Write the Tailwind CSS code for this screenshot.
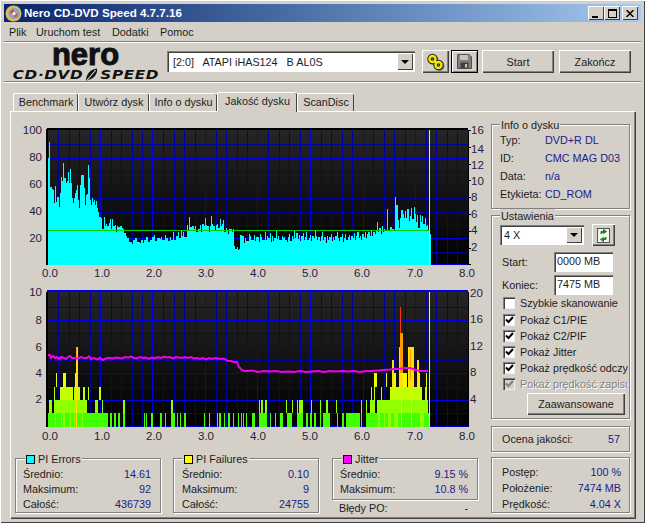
<!DOCTYPE html>
<html><head><meta charset="utf-8"><script src="https://cdn.jsdelivr.net/npm/@tailwindcss/browser@4"></script></head>
<body class="m-0 bg-[#d4d0c8]">
<div class="w-[645px] h-[523px] bg-[#d4d0c8] overflow-hidden flex flex-col pt-[4px] px-[4px] font-['Liberation_Sans',sans-serif] text-[10.8px] leading-[14px] text-[#1c1c1c] shadow-[inset_1px_1px_0_#fff,inset_-1px_-1px_0_#404040]">
  <!-- title -->
  <div class="h-[18px] shrink-0 flex items-center bg-gradient-to-r from-[#0a246a] to-[#a6caf0] pl-[1px] pr-[3px]">
    <svg width="17" height="17" viewBox="0 0 17 17" class="shrink-0"><circle cx="8.5" cy="8.5" r="8" fill="#d8c050"/><circle cx="9" cy="8.5" r="5.8" fill="#8aa4cc"/><path d="M5 8.5a4 4 0 0 1 4-4v4z" fill="#e05030"/><path d="M9 8.5h4a4 4 0 0 1-4 4z" fill="#d06040"/><circle cx="9" cy="8.5" r="1.5" fill="#fff"/></svg>
    <span class="ml-[2px] font-bold text-[11.6px] text-white whitespace-nowrap">Nero CD-DVD Speed 4.7.7.16</span>
    <div class="ml-auto flex">
      <button class="w-[16px] h-[14px] bg-[#d4d0c8] flex items-end justify-start pl-[4px] pb-[2px] shadow-[inset_1px_1px_0_#fff,inset_-1px_-1px_0_#404040]"><span class="block w-[6px] h-[2px] bg-black"></span></button>
      <button class="w-[16px] h-[14px] bg-[#d4d0c8] flex items-center justify-center shadow-[inset_1px_1px_0_#fff,inset_-1px_-1px_0_#404040]"><span class="block w-[9px] h-[9px] border border-black border-t-2"></span></button>
      <button class="ml-[2px] w-[16px] h-[14px] bg-[#d4d0c8] flex items-center justify-center shadow-[inset_1px_1px_0_#fff,inset_-1px_-1px_0_#404040]"><svg width="8" height="7" viewBox="0 0 8 7"><path d="M0.5 0L7.5 7M7.5 0L0.5 7" stroke="#000" stroke-width="1.5"/></svg></button>
    </div>
  </div>
  <!-- menu -->
  <div class="h-[20px] shrink-0 flex items-center pl-[5px] border-b border-[#808080] shadow-[0_1px_0_#fff]">
    <span class="w-[27px]">Plik</span><span class="w-[76px]">Uruchom test</span><span class="w-[48px]">Dodatki</span><span>Pomoc</span>
  </div>
  <!-- toolbar -->
  <div class="h-[39px] shrink-0 flex border-b border-[#808080] shadow-[0_1px_0_#fff] mt-[1px]">
    <div class="w-[163px] shrink-0 flex flex-col items-center pt-[2px]">
      <span class="block font-bold text-[31px] leading-[19px] text-[#111] [-webkit-text-stroke:1px_#111] h-[20px]">nero</span>
      <div class="flex items-center mt-[4px] scale-x-[1.22] text-[#111] font-['DejaVu_Sans',sans-serif] font-bold italic text-[12.5px] leading-[12px] whitespace-nowrap">
        <span class="tracking-[0.5px]">CD·DVD</span>
        <svg width="12" height="13" viewBox="0 0 12 13" class="mx-[1px]"><path d="M10 0.5C5 1 1 6 1 12.5C6 12 11 7 10 0.5z" fill="#111"/><path d="M9 2L2 12" stroke="#d4d0c8"/></svg>
        <span class="tracking-[0.5px]">SPEED</span>
      </div>
    </div>
    <div class="mt-[8px] w-[248px] h-[21px] shrink-0 bg-white flex items-center pl-[6px] pr-[2px] shadow-[inset_1px_1px_0_#808080,inset_2px_2px_0_#404040,inset_-1px_-1px_0_#fff]">
      <span class="whitespace-pre">[2:0]   ATAPI iHAS124   B AL0S</span>
      <span class="ml-auto w-[16px] h-[17px] bg-[#d4d0c8] flex items-center justify-center shadow-[inset_1px_1px_0_#fff,inset_-1px_-1px_0_#404040]"><span class="block border-x-[4px] border-x-transparent border-t-[4px] border-t-black"></span></span>
    </div>
    <button class="mt-[7px] ml-[7px] w-[27px] h-[23px] shrink-0 flex items-center justify-center bg-[#d4d0c8] shadow-[inset_1px_1px_0_#fff,inset_-1px_-1px_0_#404040,inset_-2px_-2px_0_#808080]">
      <svg width="18" height="18" viewBox="0 0 18 18"><g fill="none"><circle cx="6.5" cy="7" r="3" stroke="#777" stroke-width="4"/><circle cx="12.5" cy="13" r="3" stroke="#777" stroke-width="4"/><circle cx="5.5" cy="6" r="3" stroke="#222" stroke-width="4.4"/><circle cx="11.5" cy="12" r="3" stroke="#222" stroke-width="4.4"/><path d="M7.5 8L9.5 10" stroke="#222" stroke-width="4"/><circle cx="5.5" cy="6" r="3" stroke="#f4ec00" stroke-width="2.4"/><circle cx="11.5" cy="12" r="3" stroke="#f4ec00" stroke-width="2.4"/><path d="M7.5 8L9.5 10" stroke="#f4ec00" stroke-width="2"/></g></svg>
    </button>
    <button class="mt-[7px] ml-[2px] w-[27px] h-[23px] shrink-0 flex items-center justify-center bg-[#d4d0c8] border border-black shadow-[inset_1px_1px_0_#fff,inset_-1px_-1px_0_#808080]">
      <svg width="15" height="15" viewBox="0 0 15 15"><path d="M0.5 0.5H12L14.5 3V14.5H0.5z" fill="#808080" stroke="#505050"/><rect x="3" y="1" width="8" height="5" fill="#c8c4bc"/><rect x="3.5" y="8.5" width="8" height="6" fill="#404040"/><rect x="8" y="10" width="2" height="3.5" fill="#c8c4bc"/></svg>
    </button>
    <button class="mt-[7px] ml-[4px] w-[72px] h-[23px] shrink-0 text-center bg-[#d4d0c8] shadow-[inset_1px_1px_0_#fff,inset_-1px_-1px_0_#404040,inset_-2px_-2px_0_#808080]">Start</button>
    <button class="mt-[7px] ml-[5px] w-[72px] h-[23px] shrink-0 text-center bg-[#d4d0c8] shadow-[inset_1px_1px_0_#fff,inset_-1px_-1px_0_#404040,inset_-2px_-2px_0_#808080]">Zakończ</button>
  </div>
  <!-- tabs -->
  <div class="h-[28px] shrink-0 pl-[9px] mt-[1px] flex items-end">
    <span class="w-[65px] h-[18px] text-center leading-[17px] border-t border-l border-white shadow-[inset_-1px_0_0_#404040] rounded-t-[2px]">Benchmark</span>
    <span class="w-[71px] h-[18px] text-center leading-[17px] border-t border-l border-white shadow-[inset_-1px_0_0_#404040] rounded-t-[2px]">Utwórz dysk</span>
    <span class="w-[68px] h-[18px] text-center leading-[17px] border-t border-l border-white shadow-[inset_-1px_0_0_#404040] rounded-t-[2px]">Info o dysku</span>
    <span class="w-[80px] h-[20px] mb-[-1px] relative text-center leading-[17px] bg-[#d4d0c8] border-t border-l border-white shadow-[inset_-1px_0_0_#404040] rounded-t-[2px]">Jakość dysku</span>
    <span class="w-[57px] h-[18px] text-center leading-[17px] border-t border-l border-white shadow-[inset_-1px_0_0_#404040] rounded-t-[2px]">ScanDisc</span>
  </div>
  <!-- panel -->
  <div class="ml-[6px] w-[625px] h-[407px] shrink-0 flex border-t border-l border-white shadow-[inset_-1px_-1px_0_#808080,1px_1px_0_#404040]">
    <div class="w-[480px] shrink-0 flex flex-col">
      <svg width="480" height="165" viewBox="11 120 480 165" class="block mt-[8px] font-['Liberation_Sans',sans-serif]" shape-rendering="crispEdges">
        <defs>
          <linearGradient id="bg" x1="0" y1="0" x2="0" y2="1"><stop offset="0" stop-color="#252525"/><stop offset="1" stop-color="#000"/></linearGradient>
        </defs>
        <rect x="48" y="130" width="420" height="135" fill="url(#bg)"/>
        <path fill="none" stroke="#00009a" d="M58.5 130V265M69.5 130V265M79.5 130V265M90.5 130V265M111.5 130V265M121.5 130V265M132.5 130V265M142.5 130V265M163.5 130V265M174.5 130V265M184.5 130V265M195.5 130V265M216.5 130V265M226.5 130V265M237.5 130V265M247.5 130V265M268.5 130V265M279.5 130V265M289.5 130V265M300.5 130V265M321.5 130V265M331.5 130V265M342.5 130V265M352.5 130V265M373.5 130V265M384.5 130V265M394.5 130V265M405.5 130V265M426.5 130V265M436.5 130V265M447.5 130V265M457.5 130V265M48 144.5H468M48 171.5H468M48 185.5H468M48 198.5H468M48 212.5H468M48 225.5H468M48 252.5H468"/>
        <path fill="none" stroke="#0000e0" d="M100.5 130V265M152.5 130V265M205.5 130V265M257.5 130V265M310.5 130V265M363.5 130V265M415.5 130V265M46 158.5H468M46 238.5H468M46 264.5H468"/>
        <path fill="#00ffff" d="M48 265V158h1V142h1V187h2V189h1V190h1V203h1V186h1V202h1V197h2V207h1V193h1V177h1V181h1V163h1V178h2V183h1V181h1V172h1V183h1V169h1V183h1V198h1V203h1V198h1V193h1V190h1V185h1V200h1V208h1V185h1V175h3V188h1V205h1V195h1V194h1V165h1V178h1V200h1V205h1V198h1V202h1V200h1V205h1V201h1V208h1V212h1V217h2V265z"/>
        <path fill="#00ffff" transform="translate(100 0) scale(1.22 1) translate(-100 0)" d="M100 265V222h1V218h1V229h1V217h1V226h1V224h1V226h1V223h1V219h1V229h1V219h1V226h1V225h1V232h1V226h1V227h1V226h2V228h1V229h1V233h1V236h1V238h2V242h2V244h1V240h2V238h1V242h3V243h1V240h1V243h1V240h2V237h1V242h2V240h2V237h1V235h1V241h2V238h2V239h1V237h1V240h2V235h1V238h2V241h1V237h1V240h2V232h1V240h1V236h2V232h1V238h1V230h1V236h1V232h1V237h2V225h1V230h1V217h1V227h1V226h2V229h1V226h1V232h1V229h2V225h1V232h1V224h1V226h1V218h1V225h1V226h1V232h1V226h1V216h1V224h1V226h1V231h1V225h1V224h1V228h1V219h1V226h1V224h1V220h1V232h1V228h1V231h1V234h1V229h2V232h1V229h1V246h1V249h1V247h1V250h1V249h1V235h1V236h2V243h1V238h1V241h2V234h1V236h1V240h2V235h1V241h1V237h2V242h1V234h1V237h1V240h2V232h1V240h1V236h1V238h1V233h1V242h1V236h1V241h1V238h1V231h1V239h1V236h1V240h2V236h1V238h1V237h1V240h1V242h1V237h1V234h1V241h1V236h1V239h1V231h1V238h1V233h1V239h1V235h1V241h1V236h1V233h1V240h1V237h1V232h1V240h1V238h1V235h1V241h1V236h1V238h1V230h1V236h1V240h1V237h1V241h1V236h1V232h1V240h1V237h1V243h1V236h1V240h1V237h1V234h1V241h1V237h1V240h1V236h1V232h1V238h1V241h1V237h1V234h1V242h1V238h1V234h1V240h1V237h1V235h1V240h1V236h1V238h1V233h1V240h1V236h1V232h1V238h1V236h1V240h1V234h1V237h1V232h1V238h1V234h1V232h1V236h1V230h1V236h1V232h1V234h1V230h1V222h1V232h1V228h1V234h1V226h1V232h1V229h1V230h1V209h1V230h2V227h1V229h2V230h1V197h1V205h1V220h1V228h1V218h1V210h1V214h1V218h1V211h1V218h1V209h1V221h1V216h1V208h1V219h1V207h1V214h1V222h1V215h1V228h1V215h1V222h1V216h1V224h1V218h1V226h1V225h1V230h1V234h1V265z"/>
        <path fill="none" stroke="#00d000" d="M48 230.5H429"/>
        <path fill="none" stroke="#e0e0e0" d="M429.5 130V265"/>
        <path fill="none" stroke="#000" stroke-width="2" d="M47 129H468M47 129V265"/>
        <path fill="none" stroke="#000" d="M468 130V265M468 130h3M468 147h3M468 164h3M468 180h3M468 197h3M468 214h3M468 231h3M468 248h3M468 264h3"/>
        <g shape-rendering="auto" font-size="11.5" fill="#1f1f3f" text-anchor="end"><text x="42" y="134">100</text><text x="42" y="161">80</text><text x="42" y="188">60</text><text x="42" y="215">40</text><text x="42" y="242">20</text></g>
        <g shape-rendering="auto" font-size="11.5" fill="#1f1f3f"><text x="471" y="134">16</text><text x="471" y="153">14</text><text x="471" y="169">12</text><text x="471" y="185">10</text><text x="471" y="201">8</text><text x="471" y="218">6</text><text x="471" y="234">4</text><text x="471" y="251">2</text></g>
        <g shape-rendering="auto" font-size="11.5" fill="#1f1f3f" text-anchor="middle"><text x="50" y="277">0.0</text><text x="102" y="277">1.0</text><text x="154" y="277">2.0</text><text x="206" y="277">3.0</text><text x="258" y="277">4.0</text><text x="310" y="277">5.0</text><text x="362" y="277">6.0</text><text x="415" y="277">7.0</text><text x="467" y="277">8.0</text></g>
      </svg>
      <svg width="480" height="165" viewBox="11 285 480 165" class="block font-['Liberation_Sans',sans-serif]" shape-rendering="crispEdges">
        <rect x="48" y="292" width="420" height="135" fill="url(#bg)"/>
        <path fill="none" stroke="#00009a" d="M58.5 292V427M69.5 292V427M79.5 292V427M90.5 292V427M111.5 292V427M121.5 292V427M132.5 292V427M142.5 292V427M163.5 292V427M174.5 292V427M184.5 292V427M195.5 292V427M216.5 292V427M226.5 292V427M237.5 292V427M247.5 292V427M268.5 292V427M279.5 292V427M289.5 292V427M300.5 292V427M321.5 292V427M331.5 292V427M342.5 292V427M352.5 292V427M373.5 292V427M384.5 292V427M394.5 292V427M405.5 292V427M426.5 292V427M436.5 292V427M447.5 292V427M457.5 292V427M48 307.5H468M48 333.5H468M48 360.5H468M48 387.5H468M48 413.5H468"/>
        <path fill="none" stroke="#0000e0" d="M100.5 292V427M152.5 292V427M205.5 292V427M257.5 292V427M310.5 292V427M363.5 292V427M415.5 292V427M48 320.5H468M48 347.5H468M48 373.5H468M48 400.5H468M48 426.5H468"/>
        <path fill="#3fff00" d="M48 413h60v14H48zM110 413h2v14h-2zM114 413h2v14h-2zM118 413h2v14h-2zM123 413h2v14h-2zM144 413h1v14h-1zM146 413h1v14h-1zM151 413h2v14h-2zM160 413h2v14h-2zM165 413h1v14h-1zM171 413h4v14h-4zM177 413h1v14h-1zM180 413h1v14h-1zM184 413h2v14h-2zM204 413h1v14h-1zM209 413h1v14h-1zM217 413h1v14h-1zM219 413h2v14h-2zM224 413h1v14h-1zM228 413h2v14h-2zM233 413h1v14h-1zM238 413h1v14h-1zM241 413h1v14h-1zM243 413h1v14h-1zM246 413h1v14h-1zM252 413h3v14h-3zM259 413h8v14h-8zM270 413h1v14h-1zM275 413h1v14h-1zM280 413h3v14h-3zM287 413h5v14h-5zM297 413h6v14h-6zM306 413h2v14h-2zM310 413h2v14h-2zM314 413h2v14h-2zM320 413h1v14h-1zM323 413h7v14h-7zM337 413h1v14h-1zM342 413h2v14h-2zM346 413h14v14h-14zM361 413h1v14h-1zM366 413h64v14h-64z"/>
        <path fill="#90ff00" d="M49 400h3v13h-3zM54 400h33v13H54zM95 400h3v13h-3zM102 400h1v13h-1zM123 400h2v13h-2zM171 400h2v13h-2zM259 400h1v13h-1zM261 400h2v13h-2zM265 400h2v13h-2zM286 400h1v13h-1zM292 400h1v13h-1zM297 400h1v13h-1zM299 400h4v13h-4zM311 400h1v13h-1zM320 400h1v13h-1zM326 400h2v13h-2zM336 400h1v13h-1zM361 400h1v13h-1zM366 400h1v13h-1zM370 400h5v13h-5zM377 400h51v13h-51z"/>
        <path fill="#90ff00" d="M55 413h1v14h-1zM61 413h1v14h-1zM63 413h2v14h-2zM70 413h1v14h-1zM74 413h1v14h-1zM82 413h1v14h-1zM378 413h2v14h-2zM384 413h1v14h-1zM388 413h3v14h-3zM394 413h4v14h-4zM420 413h4v14h-4z"/>
        <path fill="#c4ff00" d="M54 387h1v13h-1zM60 387h13v13H60zM74 387h6v13h-6zM83 387h2v13h-2zM88 387h1v13h-1zM99 387h2v13h-2zM371 387h1v13h-1zM374 387h1v13h-1zM381 387h1v13h-1zM390 387h32v13h-32zM425 387h2v13h-2z"/>
        <path fill="#e8ff00" d="M56 373h1v14h-1zM63 373h3v14h-3zM75 373h3v14h-3zM374 373h3v14h-3zM386 373h1v14h-1zM392 373h3v14h-3zM395 373h1v14h-1zM399 373h8v14h-8zM408 373h6v14h-6zM419 373h1v14h-1zM426 373h1v14h-1z"/>
        <path fill="#ffe000" d="M76 347h2v40h-2zM392 360h2v27h-2zM399 347h4v40h-4zM408 347h6v40h-6zM417 360h2v27h-2zM401 373h1v54h-1zM411 373h1v54h-1zM76 387h1v40h-1z"/>
        <path fill="#ff9900" d="M400 333h3v40h-3zM76 347h1v14h-1zM410 350h1v30h-1z"/>
        <path fill="#ff3300" d="M400 307h1v26h-1z"/>
        <path fill="none" stroke="#e0e0e0" d="M429.5 292V427"/>
        <path shape-rendering="auto" fill="none" stroke="#f000f0" stroke-width="2" d="M48 355L50 355L51 358L53 356L55 358L57 357L59 359L61 357L64 358L66 359L68 357L70 356L72 358L75 358L78 358.5L81 357L84 358L87 358L89 356.5L91 359L94 358L97 359.5L100 358L103 360L105 359L107 358L110 358L113 358.5L116 357.5L119 358L122 358.5L125 357L128 357.5L131 356.5L134 358L137 358.5L140 357L143 358L146 357.5L149 359L152 357.5L155 358.5L158 357L161 358L164 356.5L167 357.5L170 357L173 358.5L176 357L179 357.5L182 358L185 357L188 358L191 357L194 358.5L197 358L200 359L203 358L206 359.5L209 358L212 359L215 358L218 358.5L221 359L224 358.5L226 360L228 361L231 361L234 362L237 362L239 367L241 369L244 371L248 371L252 370.5L258 372L264 371L270 371.5L276 371L282 372L288 371.5L294 372L300 371L306 372L312 371.5L318 371L324 372L330 371L336 371.5L342 371L348 371.5L354 371L360 372L366 371L372 371L378 370.5L384 370L390 369.5L394 369L398 369L404 368L410 368L413 369L415 370L420 371L426 371L428 371"/>
        <path fill="none" stroke="#0000e0" stroke-width="2" d="M47 291H468"/>
        <path fill="none" stroke="#000" stroke-width="2" d="M47 292V427"/>
        <path fill="none" stroke="#000" d="M468 292V427"/>
        <g shape-rendering="auto" font-size="11.5" fill="#1f1f3f" text-anchor="end"><text x="42" y="296">10</text><text x="42" y="324">8</text><text x="42" y="351">6</text><text x="42" y="377">4</text><text x="42" y="403">2</text></g>
        <g shape-rendering="auto" font-size="11.5" fill="#1f1f3f"><text x="470" y="297">20</text><text x="470" y="323">16</text><text x="470" y="350">12</text><text x="470" y="376">8</text><text x="470" y="403">4</text></g>
        <g shape-rendering="auto" font-size="11.5" fill="#1f1f3f" text-anchor="middle"><text x="50" y="440">0.0</text><text x="102" y="440">1.0</text><text x="154" y="440">2.0</text><text x="206" y="440">3.0</text><text x="258" y="440">4.0</text><text x="310" y="440">5.0</text><text x="362" y="440">6.0</text><text x="415" y="440">7.0</text><text x="467" y="440">8.0</text></g>
      </svg>
      <div class="flex items-start pl-[4px] mt-[8px] gap-[12px]">
        <div class="relative w-[146px] h-[55px] shrink-0 border border-[#808080] shadow-[1px_1px_0_#fff,inset_1px_1px_0_#fff] px-[7px] pt-[8px]">
          <div class="absolute left-[9px] top-[-7px] flex items-center gap-[3px] bg-[#d4d0c8] px-[1px]"><span class="w-[9px] h-[9px] bg-[#00ffff] border border-black"></span>PI Errors</div>
          <div class="flex justify-between pr-[2px] h-[15px]"><span>Średnio:</span><span class="text-[#1a1a8c]">14.61</span></div>
          <div class="flex justify-between pr-[2px] h-[15px]"><span>Maksimum:</span><span class="text-[#1a1a8c]">92</span></div>
          <div class="flex justify-between pr-[2px] h-[15px]"><span>Całość:</span><span class="text-[#1a1a8c]">436739</span></div>
        </div>
        <div class="relative w-[146px] h-[55px] shrink-0 border border-[#808080] shadow-[1px_1px_0_#fff,inset_1px_1px_0_#fff] px-[8px] pt-[8px]">
          <div class="absolute left-[9px] top-[-7px] flex items-center gap-[3px] bg-[#d4d0c8] px-[1px]"><span class="w-[9px] h-[9px] bg-[#ffff00] border border-black"></span>PI Failures</div>
          <div class="flex justify-between pr-[1px] h-[15px]"><span>Średnio:</span><span class="text-[#1a1a8c]">0.10</span></div>
          <div class="flex justify-between pr-[1px] h-[15px]"><span>Maksimum:</span><span class="text-[#1a1a8c]">9</span></div>
          <div class="flex justify-between pr-[1px] h-[15px]"><span>Całość:</span><span class="text-[#1a1a8c]">24755</span></div>
        </div>
        <div class="shrink-0 w-[147px]">
          <div class="relative h-[42px] ml-[1px] w-[146px] border border-[#808080] shadow-[1px_1px_0_#fff,inset_1px_1px_0_#fff] px-[7px] pt-[8px]">
            <div class="absolute left-[9px] top-[-7px] flex items-center gap-[3px] bg-[#d4d0c8] px-[1px]"><span class="w-[9px] h-[9px] bg-[#ff00ff] border border-black"></span>Jitter</div>
            <div class="flex justify-between pr-[2px] h-[15px]"><span>Średnio:</span><span class="text-[#1a1a8c]">9.15 %</span></div>
            <div class="flex justify-between pr-[2px] h-[15px]"><span>Maksimum:</span><span class="text-[#1a1a8c]">10.8 %</span></div>
          </div>
          <div class="flex justify-between ml-[8px] mt-[1px] pr-[10px] h-[15px]"><span>Błędy PO:</span><span>-</span></div>
        </div>
      </div>
    </div>
    <!-- right col -->
    <div class="w-[140px] flex flex-col pt-[12px]">
      <div class="relative h-[85px] w-[139px] shrink-0 border border-[#808080] shadow-[1px_1px_0_#fff,inset_1px_1px_0_#fff] pl-[8px] pt-[8px]">
        <div class="absolute left-[8px] top-[-7px] bg-[#d4d0c8] px-[1px]">Info o dysku</div>
        <div class="flex h-[18px]"><span class="w-[45px]">Typ:</span><span class="text-[#1a1a8c]">DVD+R DL</span></div>
        <div class="flex h-[18px]"><span class="w-[45px]">ID:</span><span class="text-[#1a1a8c]">CMC MAG D03</span></div>
        <div class="flex h-[18px]"><span class="w-[45px]">Data:</span><span class="text-[#1a1a8c]">n/a</span></div>
        <div class="flex h-[18px]"><span class="w-[45px]">Etykieta:</span><span class="text-[#1a1a8c]">CD_ROM</span></div>
      </div>
      <div class="relative mt-[6px] h-[204px] w-[139px] shrink-0 border border-[#808080] shadow-[1px_1px_0_#fff,inset_1px_1px_0_#fff] pl-[8px] pt-[8px]">
        <div class="absolute left-[8px] top-[-7px] bg-[#d4d0c8] px-[1px]">Ustawienia</div>
        <div class="flex items-center h-[22px]">
          <div class="w-[84px] h-[20px] bg-white flex items-center pl-[4px] pr-[2px] shadow-[inset_1px_1px_0_#808080,inset_2px_2px_0_#404040,inset_-1px_-1px_0_#fff]"><span>4 X</span><span class="ml-auto w-[16px] h-[16px] bg-[#d4d0c8] flex items-center justify-center shadow-[inset_1px_1px_0_#fff,inset_-1px_-1px_0_#404040]"><span class="block border-x-[4px] border-x-transparent border-t-[4px] border-t-black"></span></span></div>
          <button class="ml-[8px] w-[23px] h-[22px] flex items-center justify-center bg-[#d4d0c8] shadow-[inset_1px_1px_0_#fff,inset_-1px_-1px_0_#404040,inset_-2px_-2px_0_#808080]"><svg width="13" height="15" viewBox="0 0 13 15"><rect x="0.5" y="0.5" width="12" height="14" fill="#f4f4f0" stroke="#555"/><path d="M4 6V3.5H8M6.5 1.5L9.5 3.5L6.5 5.5z" stroke="#118811" fill="#118811" stroke-width="1"/><path d="M9 9V11.5H5M6.5 9.5L3.5 11.5L6.5 13.5z" stroke="#118811" fill="#118811" stroke-width="1"/></svg></button>
        </div>
        <div class="flex items-center h-[20px] mt-[6px] pl-[2px]"><span class="w-[52px]">Start:</span><span class="w-[59px] h-[20px] bg-white pl-[3px] leading-[19px] shadow-[inset_1px_1px_0_#808080,inset_2px_2px_0_#404040,inset_-1px_-1px_0_#fff]">0000 MB</span></div>
        <div class="flex items-center h-[20px] mt-[3px] pl-[2px]"><span class="w-[52px]">Koniec:</span><span class="w-[59px] h-[20px] bg-white pl-[3px] leading-[19px] shadow-[inset_1px_1px_0_#808080,inset_2px_2px_0_#404040,inset_-1px_-1px_0_#fff]">7475 MB</span></div>
        <div class="flex items-center h-[16px] pl-[3px] whitespace-nowrap"><span class="w-[12px] h-[12px] bg-white shrink-0 shadow-[inset_1px_1px_0_#808080,inset_2px_2px_0_#404040,inset_-1px_-1px_0_#f0f0f0]"></span><span class="ml-[5px]">Szybkie skanowanie</span></div>
        <div class="flex items-center h-[16px] mt-[1px] pl-[3px] whitespace-nowrap"><span class="w-[12px] h-[12px] bg-white shrink-0 flex items-center justify-center shadow-[inset_1px_1px_0_#808080,inset_2px_2px_0_#404040,inset_-1px_-1px_0_#f0f0f0]"><svg width="9" height="8" viewBox="0 0 9 8"><path d="M1 3.5L3.5 6L8 1" fill="none" stroke="#000" stroke-width="2"/></svg></span><span class="ml-[5px]">Pokaż C1/PIE</span></div>
        <div class="flex items-center h-[16px] pl-[3px] whitespace-nowrap"><span class="w-[12px] h-[12px] bg-white shrink-0 flex items-center justify-center shadow-[inset_1px_1px_0_#808080,inset_2px_2px_0_#404040,inset_-1px_-1px_0_#f0f0f0]"><svg width="9" height="8" viewBox="0 0 9 8"><path d="M1 3.5L3.5 6L8 1" fill="none" stroke="#000" stroke-width="2"/></svg></span><span class="ml-[5px]">Pokaż C2/PIF</span></div>
        <div class="flex items-center h-[16px] pl-[3px] whitespace-nowrap"><span class="w-[12px] h-[12px] bg-white shrink-0 flex items-center justify-center shadow-[inset_1px_1px_0_#808080,inset_2px_2px_0_#404040,inset_-1px_-1px_0_#f0f0f0]"><svg width="9" height="8" viewBox="0 0 9 8"><path d="M1 3.5L3.5 6L8 1" fill="none" stroke="#000" stroke-width="2"/></svg></span><span class="ml-[5px]">Pokaż Jitter</span></div>
        <div class="flex items-center h-[16px] pl-[3px] whitespace-nowrap w-[128px] overflow-hidden"><span class="w-[12px] h-[12px] bg-white shrink-0 flex items-center justify-center shadow-[inset_1px_1px_0_#808080,inset_2px_2px_0_#404040,inset_-1px_-1px_0_#f0f0f0]"><svg width="9" height="8" viewBox="0 0 9 8"><path d="M1 3.5L3.5 6L8 1" fill="none" stroke="#000" stroke-width="2"/></svg></span><span class="ml-[5px]">Pokaż prędkość odczytu</span></div>
        <div class="flex items-center h-[16px] pl-[3px] whitespace-nowrap w-[128px] overflow-hidden"><span class="w-[12px] h-[12px] bg-[#d4d0c8] shrink-0 flex items-center justify-center shadow-[inset_1px_1px_0_#808080,inset_2px_2px_0_#404040,inset_-1px_-1px_0_#f0f0f0]"><svg width="9" height="8" viewBox="0 0 9 8"><path d="M1 3.5L3.5 6L8 1" fill="none" stroke="#808080" stroke-width="2"/></svg></span><span class="ml-[5px] text-[#808080] [text-shadow:1px_1px_0_#fff]">Pokaż prędkość zapisu</span></div>
        <button class="block ml-[27px] mt-[1px] w-[98px] h-[22px] bg-[#d4d0c8] text-center shadow-[inset_1px_1px_0_#fff,inset_-1px_-1px_0_#404040,inset_-2px_-2px_0_#808080]">Zaawansowane</button>
      </div>
      <div class="mt-[7px] h-[26px] w-[139px] shrink-0 flex items-center justify-between pl-[10px] pr-[9px] border border-[#808080] shadow-[1px_1px_0_#fff,inset_1px_1px_0_#fff]"><span>Ocena jakości:</span><span class="text-[#1a1a8c]">57</span></div>
      <div class="mt-[5px] h-[56px] w-[139px] shrink-0 pl-[10px] pr-[8px] pt-[7px] border border-[#808080] shadow-[1px_1px_0_#fff,inset_1px_1px_0_#fff]">
        <div class="flex justify-between h-[16px]"><span>Postęp:</span><span class="text-[#1a1a8c]">100 %</span></div>
        <div class="flex justify-between h-[16px]"><span>Położenie:</span><span class="text-[#1a1a8c]">7474 MB</span></div>
        <div class="flex justify-between h-[16px]"><span>Prędkość:</span><span class="text-[#1a1a8c]">4.04 X</span></div>
      </div>
    </div>
  </div>
</div>
</body></html>
